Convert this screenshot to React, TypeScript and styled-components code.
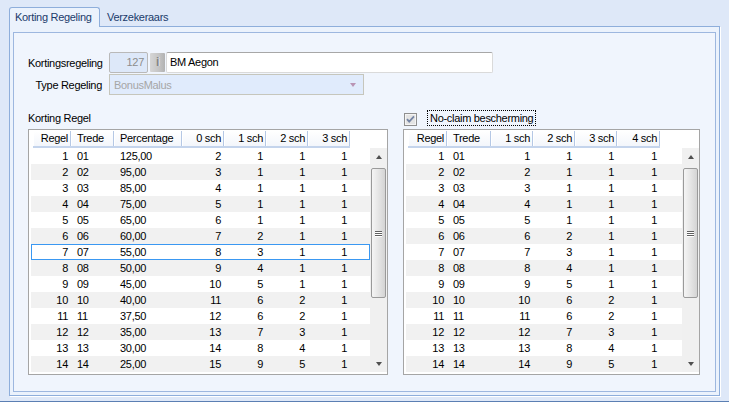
import React from 'react';
import styled, { createGlobalStyle, css } from 'styled-components';

const GlobalStyle = createGlobalStyle`
  html, body { margin: 0; padding: 0; }
  body {
    background: #dee8f8;
    font-family: "Liberation Sans", Arial, sans-serif;
    font-size: 11px;
    letter-spacing: -0.3px;
    color: #000;
  }
`;

const Window = styled.div`
  width: 729px;
  height: 402px;
  box-sizing: border-box;
  background: #dee8f8;
  border-bottom: 1px solid #5b7fb3;
  display: flex;
  flex-direction: column;
  overflow: hidden;
`;

const TabStrip = styled.div`
  height: 26px;
  flex: none;
  display: flex;
  align-items: flex-end;
  padding-left: 9px;
  gap: 1px;
`;

const Tab = styled.div<{ $active?: boolean }>`
  box-sizing: border-box;
  display: flex;
  align-items: center;
  color: #1b3b6b;
  white-space: nowrap;
  ${p =>
    p.$active
      ? css`
          width: 91px;
          height: 20px;
          padding: 0 0 1px 5px;
          background: #ebf2fc;
          border: 1px solid #8eaedb;
          border-bottom: none;
          border-radius: 3px 3px 0 0;
          margin-bottom: -1px;
          position: relative;
          z-index: 1;
        `
      : css`
          height: 18px;
          padding: 0 6px 0 6px;
        `}
`;

const TabPage = styled.div`
  margin-left: 9px;
  width: 711px;
  height: 370px;
  flex: none;
  box-sizing: border-box;
  border: 1px solid #8eaedb;
  box-shadow: 1px 1px 0 #ffffff;
  background: #ebf2fc;
  padding: 5px 3px 3px 3px;
`;

const Group = styled.div`
  box-sizing: border-box;
  height: 360px;
  border: 1px solid #9db7df;
  background: #f0f5fd;
  padding: 19px 15px 0 14px;
  display: flex;
  flex-direction: column;
`;

const Form = styled.div`
  display: grid;
  grid-template-columns: 74px auto;
  column-gap: 7px;
  row-gap: 1px;
  grid-auto-rows: 21px;
  align-items: center;
`;

const Label = styled.div`
  text-align: right;
  white-space: nowrap;
`;

const FieldRow = styled.div`
  display: flex;
  align-items: stretch;
  height: 21px;
`;

const NumberBox = styled.div`
  box-sizing: border-box;
  width: 39px;
  border: 1px solid #b9b9b9;
  border-radius: 2px;
  background: #dde8f9;
  color: #8d8d8d;
  text-align: right;
  padding-right: 3px;
  line-height: 19px;
`;

const InfoButton = styled.div`
  box-sizing: border-box;
  width: 15px;
  margin: 1px 1px 0 2px;
  height: 19px;
  background: linear-gradient(to right, #d6d6d6, #c4c4c4 60%, #b2b2b2);
  border-radius: 1px;
  color: #858585;
  font-weight: bold;
  text-align: center;
  line-height: 19px;
  font-size: 12px;
  text-shadow: 1px 0 0 #e6e6e6;
`;

const TextInput = styled.div`
  box-sizing: border-box;
  width: 327px;
  border: 1px solid #dadada;
  border-top-color: #a7a7a7;
  border-radius: 2px;
  background: #ffffff;
  padding-left: 3px;
  line-height: 19px;
`;

const SelectBox = styled.div`
  box-sizing: border-box;
  width: 255px;
  height: 21px;
  border: 1px solid #c6c6bc;
  background: #e0ebfc;
  color: #a6a6a6;
  padding: 0 7px 0 4px;
  display: flex;
  align-items: center;
  justify-content: space-between;
`;

const SelectArrow = styled.span`
  width: 0;
  height: 0;
  border-left: 3px solid transparent;
  border-right: 3px solid transparent;
  border-top: 4px solid #b994b4;
  margin-top: 1px;
`;

const Panels = styled.div`
  display: flex;
  gap: 15px;
  margin-top: 15px;
`;

const Panel = styled.div<{ $w: number }>`
  width: ${p => p.$w}px;
  flex: none;
  display: flex;
  flex-direction: column;
`;

const PanelHead = styled.div`
  height: 16px;
  margin-bottom: 3px;
  display: flex;
  align-items: center;
  white-space: nowrap;
`;

const CheckBox = styled.span`
  width: 13px;
  height: 13px;
  margin: 2px 0 0 1px;
  display: block;
`;

const FocusLabel = styled.span`
  margin-left: 10px;
  height: 16px;
  box-sizing: border-box;
  border: 1px dotted #000;
  padding: 0 2px;
  line-height: 14px;
`;

const TableBox = styled.div`
  box-sizing: border-box;
  height: 246px;
  border: 1px solid #a5a5a5;
  background: #ffffff;
  padding: 1px 0 2px 2px;
  display: flex;
  flex-direction: column;
`;

const HeaderRow = styled.div`
  display: flex;
  height: 17px;
  padding-left: 2px;
  flex: none;
`;

const HeadCell = styled.div<{ $w: number; $right: boolean }>`
  box-sizing: border-box;
  width: ${p => p.$w}px;
  flex: none;
  height: 17px;
  line-height: 15px;
  padding: ${p => (p.$right ? '0 3px 0 0' : '0 0 0 6px')};
  text-align: ${p => (p.$right ? 'right' : 'left')};
  background: linear-gradient(#ffffff, #f3f6fb);
  border-bottom: 2px solid #c4d4ec;
  box-shadow: inset -1px 0 0 #b5c8e5, inset 1px 0 0 #ffffff;
  white-space: nowrap;
`;

const BodyArea = styled.div`
  display: flex;
  flex: none;
  height: 224px;
`;

const Rows = styled.div`
  flex: 1;
  display: flex;
  flex-direction: column;
`;

const Row = styled.div<{ $alt: boolean; $sel: boolean }>`
  display: flex;
  height: 16px;
  flex: none;
  padding-left: 2px;
  background: ${p => (p.$alt ? '#f1f1f1' : '#ffffff')};
  ${p => p.$sel && css`box-shadow: inset 0 0 0 1px #3a98f2;`}
`;

const Cell = styled.div<{ $w: number; $right: boolean }>`
  box-sizing: border-box;
  width: ${p => p.$w}px;
  flex: none;
  line-height: 16px;
  padding: ${p => (p.$right ? '0 3px 0 0' : '0 0 0 6px')};
  text-align: ${p => (p.$right ? 'right' : 'left')};
  white-space: nowrap;
`;

const ScrollBar = styled.div`
  width: 17px;
  flex: none;
  display: flex;
  flex-direction: column;
  background: #f0f0f0;
`;

const ArrowBtn = styled.div`
  height: 17px;
  flex: none;
  display: flex;
  align-items: center;
  justify-content: center;
`;

const Arrow = styled.span<{ $down?: boolean }>`
  width: 0;
  height: 0;
  border-left: 3.5px solid transparent;
  border-right: 3.5px solid transparent;
  ${p => (p.$down ? 'border-top: 4px solid #505050;' : 'border-bottom: 4px solid #505050;')}
`;

const Track = styled.div`
  flex: 1;
  padding: 3px 1px 0 1px;
`;

const Thumb = styled.div`
  height: 130px;
  box-sizing: border-box;
  border: 1px solid #9a9a9a;
  border-radius: 2px;
  background: linear-gradient(to right, #f5f5f5, #e7e7e7 45%, #d4d4d4);
  display: flex;
  flex-direction: column;
  align-items: center;
  justify-content: center;
  gap: 1px;
`;

const Grip = styled.span`
  width: 7px;
  height: 1px;
  background: #5f5f5f;
  box-shadow: 0 1px 0 #ffffff;
`;

type Col = { w: number; right: boolean; h: string };

const leftCols: Col[] = [
  { w: 38, right: true, h: 'Regel' },
  { w: 43, right: false, h: 'Trede' },
  { w: 68, right: false, h: 'Percentage' },
  { w: 42, right: true, h: '0 sch' },
  { w: 42, right: true, h: '1 sch' },
  { w: 42, right: true, h: '2 sch' },
  { w: 42, right: true, h: '3 sch' },
];

const rightCols: Col[] = [
  { w: 39, right: true, h: 'Regel' },
  { w: 44, right: false, h: 'Trede' },
  { w: 42, right: true, h: '1 sch' },
  { w: 42, right: true, h: '2 sch' },
  { w: 42, right: true, h: '3 sch' },
  { w: 43, right: true, h: '4 sch' },
];

const leftData: string[][] = [
  ['1', '01', '125,00', '2', '1', '1', '1'],
  ['2', '02', '95,00', '3', '1', '1', '1'],
  ['3', '03', '85,00', '4', '1', '1', '1'],
  ['4', '04', '75,00', '5', '1', '1', '1'],
  ['5', '05', '65,00', '6', '1', '1', '1'],
  ['6', '06', '60,00', '7', '2', '1', '1'],
  ['7', '07', '55,00', '8', '3', '1', '1'],
  ['8', '08', '50,00', '9', '4', '1', '1'],
  ['9', '09', '45,00', '10', '5', '1', '1'],
  ['10', '10', '40,00', '11', '6', '2', '1'],
  ['11', '11', '37,50', '12', '6', '2', '1'],
  ['12', '12', '35,00', '13', '7', '3', '1'],
  ['13', '13', '30,00', '14', '8', '4', '1'],
  ['14', '14', '25,00', '15', '9', '5', '1'],
];

const rightData: string[][] = [
  ['1', '01', '1', '1', '1', '1'],
  ['2', '02', '2', '1', '1', '1'],
  ['3', '03', '3', '1', '1', '1'],
  ['4', '04', '4', '1', '1', '1'],
  ['5', '05', '5', '1', '1', '1'],
  ['6', '06', '6', '2', '1', '1'],
  ['7', '07', '7', '3', '1', '1'],
  ['8', '08', '8', '4', '1', '1'],
  ['9', '09', '9', '5', '1', '1'],
  ['10', '10', '10', '6', '2', '1'],
  ['11', '11', '11', '6', '2', '1'],
  ['12', '12', '12', '7', '3', '1'],
  ['13', '13', '13', '8', '4', '1'],
  ['14', '14', '14', '9', '5', '1'],
];

function Grid({ cols, data, selected }: { cols: Col[]; data: string[][]; selected?: number }) {
  return (
    <TableBox>
      <HeaderRow>
        {cols.map(c => (
          <HeadCell key={c.h} $w={c.w} $right={c.right}>
            {c.h}
          </HeadCell>
        ))}
      </HeaderRow>
      <BodyArea>
        <Rows>
          {data.map((r, i) => (
            <Row key={i} $alt={i % 2 === 1} $sel={i === selected}>
              {r.map((v, j) => (
                <Cell key={j} $w={cols[j].w} $right={cols[j].right}>
                  {v}
                </Cell>
              ))}
            </Row>
          ))}
        </Rows>
        <ScrollBar>
          <ArrowBtn>
            <Arrow />
          </ArrowBtn>
          <Track>
            <Thumb>
              <Grip />
              <Grip />
              <Grip />
            </Thumb>
          </Track>
          <ArrowBtn>
            <Arrow $down />
          </ArrowBtn>
        </ScrollBar>
      </BodyArea>
    </TableBox>
  );
}

export default function App() {
  return (
    <>
      <GlobalStyle />
      <Window>
        <TabStrip>
          <Tab $active>Korting Regeling</Tab>
          <Tab>Verzekeraars</Tab>
        </TabStrip>
        <TabPage>
          <Group>
            <Form>
              <Label>Kortingsregeling</Label>
              <FieldRow>
                <NumberBox>127</NumberBox>
                <InfoButton>i</InfoButton>
                <TextInput>BM Aegon</TextInput>
              </FieldRow>
              <Label>Type Regeling</Label>
              <FieldRow>
                <SelectBox>
                  <span>BonusMalus</span>
                  <SelectArrow />
                </SelectBox>
              </FieldRow>
            </Form>
            <Panels>
              <Panel $w={360}>
                <PanelHead>Korting Regel</PanelHead>
                <Grid cols={leftCols} data={leftData} selected={6} />
              </Panel>
              <Panel $w={297}>
                <PanelHead>
                  <CheckBox>
                    <svg width="13" height="13" viewBox="0 0 13 13">
                      <rect x="0.5" y="0.5" width="12" height="12" fill="#e4e4e4" stroke="#8f8f8f" />
                      <rect x="1.5" y="1.5" width="10" height="10" fill="none" stroke="#f4f4f4" />
                      <path d="M3 6.2 L5.2 8.6 L10 3.4" fill="none" stroke="#7484a4" strokeWidth="1.8" />
                    </svg>
                  </CheckBox>
                  <FocusLabel>No-claim bescherming</FocusLabel>
                </PanelHead>
                <Grid cols={rightCols} data={rightData} />
              </Panel>
            </Panels>
          </Group>
        </TabPage>
      </Window>
    </>
  );
}
